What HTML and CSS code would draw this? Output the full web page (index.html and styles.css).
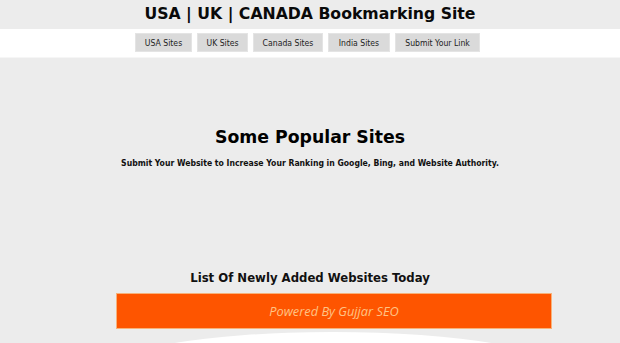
FILE: index.html
```html
<!DOCTYPE html>
<html lang="en">
<head>
<meta charset="utf-8">
<title>USA | UK | CANADA Bookmarking Site</title>
<link rel="stylesheet" href="styles.css">
</head>
<body>
<header class="site-header">
  <h1 class="site-title">USA | UK | CANADA Bookmarking Site</h1>
</header>
<nav class="main-nav">
  <a class="nav-btn" href="#">USA Sites</a>
  <a class="nav-btn" href="#">UK Sites</a>
  <a class="nav-btn" href="#">Canada Sites</a>
  <a class="nav-btn" href="#">India Sites</a>
  <a class="nav-btn" href="#">Submit Your Link</a>
</nav>
<main class="content">
  <section class="popular">
    <h2 class="popular-title">Some Popular Sites</h2>
    <p class="popular-sub">Submit Your Website to Increase Your Ranking in Google, Bing, and Website Authority.</p>
  </section>
  <section class="newly">
    <h3 class="newly-title">List Of Newly Added Websites Today</h3>
    <div class="powered">Powered By Gujjar SEO</div>
    <div class="blob-clip"><div class="blob"></div></div>
  </section>
</main>
</body>
</html>
```

FILE: styles.css
```css
html, body {
  margin: 0;
  padding: 0;
  overflow: hidden;
}
body {
  background: #ececec;
  font-family: "DejaVu Sans", Verdana, sans-serif;
  color: #000;
  height: 343px;
}
.site-header {
  height: 29px;
  background: #ececec;
  display: flex;
  align-items: center;
  justify-content: center;
}
.site-title {
  margin: 0;
  font-size: 15.7px;
  font-weight: bold;
  line-height: 20px;
  color: #0a0a0a;
  padding-bottom: 1px;
}
.main-nav {
  height: 27px;
  background: #fff;
  border-bottom: 1px solid #f6f6f6;
  display: flex;
  justify-content: center;
  align-items: center;
  gap: 5px;
  padding-right: 5px;
  padding-bottom: 1px;
}
.nav-btn {
  display: flex;
  flex: none;
  align-items: center;
  justify-content: center;
  height: 19px;
  background: #dadada;
  border: 1px solid #e4e4e4;
  box-sizing: border-box;
  color: #222;
  text-decoration: none;
  white-space: nowrap;
  font-family: "DejaVu Sans Condensed", "DejaVu Sans", sans-serif;
  font-size: 8.6px;
  padding: 0;
}
.nav-btn:nth-child(1) { width: 57px; }
.nav-btn:nth-child(2) { width: 51px; }
.nav-btn:nth-child(3) { width: 70px; }
.nav-btn:nth-child(4) { width: 62px; }
.nav-btn:nth-child(5) { width: 85px; }
.content {
  display: flex;
  flex-direction: column;
  align-items: center;
}
.popular {
  padding-top: 68px;
  text-align: center;
}
.popular-title {
  margin: 0;
  font-size: 17.3px;
  font-weight: bold;
  line-height: 22px;
}
.popular-sub {
  margin: 9px 0 0;
  font-family: "DejaVu Sans Condensed", "DejaVu Sans", sans-serif;
  font-size: 8.6px;
  font-weight: bold;
  line-height: 12px;
  color: #111;
}
.newly {
  padding-top: 100px;
  display: flex;
  flex-direction: column;
  align-items: center;
  width: 100%;
}
.newly-title {
  margin: 0;
  font-family: "DejaVu Sans Condensed", "DejaVu Sans", sans-serif;
  font-size: 13px;
  font-weight: bold;
  line-height: 18px;
  color: #111;
}
.powered {
  margin: 6px 0 0 48px;
  width: 436px;
  height: 36px;
  box-sizing: border-box;
  background: #fe5500;
  border: 1px solid #f7b27a;
  display: flex;
  align-items: center;
  justify-content: center;
  font-family: "Open Sans", sans-serif;
  font-style: italic;
  font-size: 12.8px;
  color: #ffc385;
}
.blob-clip {
  margin: 3px 0 0 46px;
  width: 460px;
  height: 12px;
  overflow: hidden;
}
.blob {
  width: 460px;
  height: 80px;
  border-radius: 50%;
  background: #fff;
}
```
